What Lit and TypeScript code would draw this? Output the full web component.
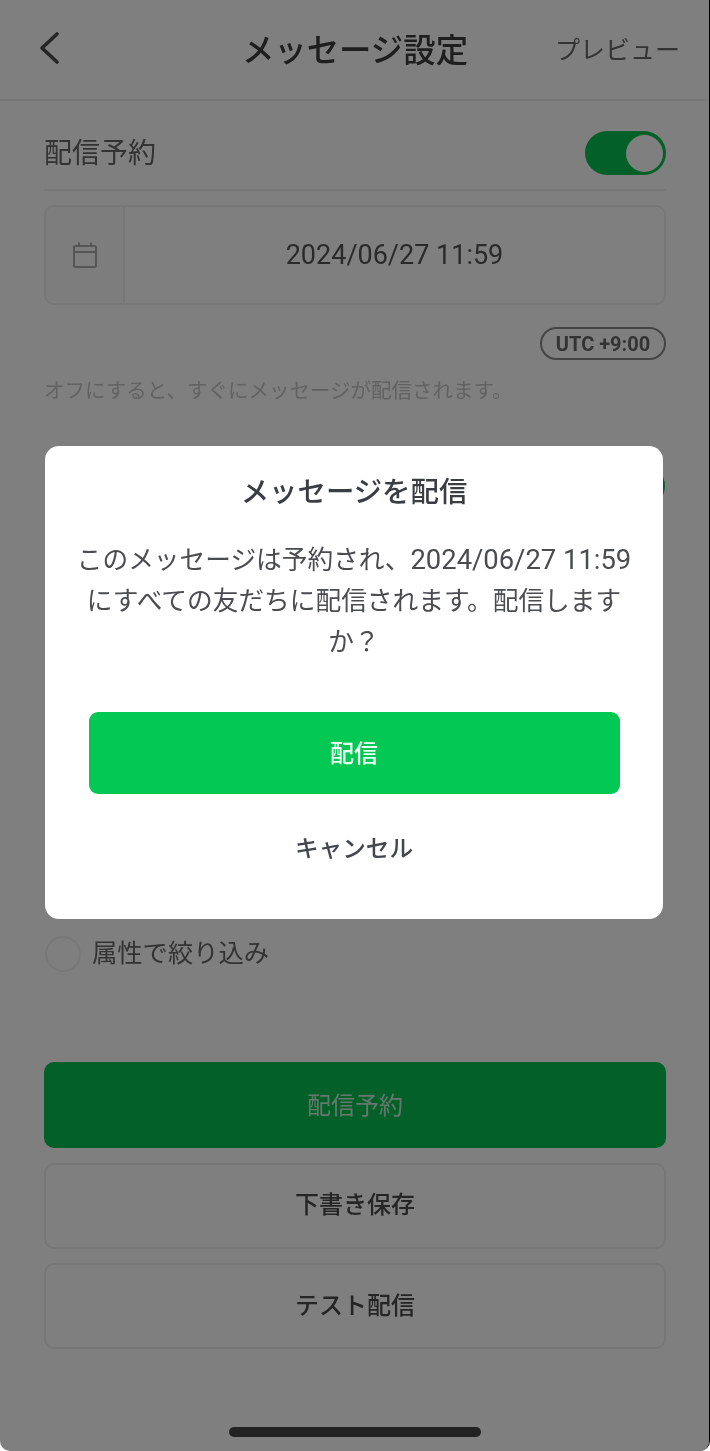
import { LitElement, html, css } from "lit";
import { customElement } from "lit/decorators.js";

@customElement("app-root")
export class AppRoot extends LitElement {
  static styles = css`
    :host {
      display: block;
      position: relative;
      width: 710px;
      height: 1451px;
      overflow: hidden;
      background: #fff;
      color: #555;
      font-family: Roboto, "Noto Sans CJK JP", "Noto Sans", sans-serif;
      filter: blur(0.5px);
    }
    .page { display: flex; flex-direction: column; height: 100%; box-sizing: border-box; }
    .header {
      height: 101px;
      flex: none;
      box-sizing: border-box;
      border-bottom: 2px solid #f0f0f0;
      display: grid;
      grid-template-columns: 1fr auto 1fr;
      align-items: center;
      padding: 3px 30px 0 30px;
    }
    .back { width: 24px; height: 36px; display: block; margin: 0 0 7px 8px; }
    .title { font-size: 32.4px; font-weight: 500; line-height: 44px; color: #3c3c3c; }
    .preview { font-size: 25px; justify-self: end; color: #666; line-height: 36px; }
    .content { padding: 0 44px; display: flex; flex-direction: column; flex: 1; }
    .row {
      height: 90px;
      box-sizing: border-box;
      border-bottom: 2px solid #f0f0f0;
      display: flex;
      align-items: center;
      justify-content: space-between;
      font-size: 28px;
      color: #666;
      padding-top: 12px;
    }
    .toggle {
      width: 81px;
      height: 44px;
      box-sizing: border-box;
      border-radius: 22px;
      background: #06c050;
      display: flex;
      align-items: center;
      justify-content: flex-end;
      padding-right: 3px;
      margin-top: 4px;
    }
    .knob { width: 37px; height: 37px; border-radius: 50%; background: #fff; }
    .datebox {
      margin-top: 14px;
      height: 100px;
      box-sizing: border-box;
      border: 2px solid #eee;
      border-radius: 10px;
      display: flex;
      align-items: stretch;
    }
    .cal {
      width: 77px;
      flex: none;
      background: #fafafa;
      border-right: 2px solid #eee;
      border-radius: 8px 0 0 8px;
      display: flex;
      align-items: center;
      justify-content: center;
    }
    .cal svg { width: 26px; height: 28px; }
    .date { flex: 1; display: flex; align-items: center; justify-content: center; font-size: 27px; color: #555; }
    .utc-row { display: flex; justify-content: flex-end; margin-top: 22px; }
    .utc {
      width: 126px;
      height: 33px;
      box-sizing: border-box;
      border: 2px solid #888;
      border-radius: 17px;
      display: flex;
      align-items: center;
      justify-content: center;
      font-size: 20px;
      font-weight: 700;
      color: #666;
    }
    .hint { margin-top: 16px; font-size: 20.5px; line-height: 30px; color: #c4c4c4; }
    .row2 { height: 46px; margin-top: 58px; display: flex; justify-content: flex-end; }
    .row2 .toggle { margin: 0 1px 0 0; }
    .spacer { height: 426px; flex: none; }
    .radio-row { display: flex; align-items: center; gap: 11px; font-size: 25.3px; color: #666; line-height: 36px; }
    .radio { width: 36px; height: 36px; margin-left: 1px; box-sizing: border-box; border: 2px solid #f0f0f0; border-radius: 50%; background: #fff; flex: none; }
    .actions { margin-top: 90px; display: flex; flex-direction: column; gap: 14.5px; }
    .btn {
      height: 86px;
      box-sizing: border-box;
      border: 2px solid #eee;
      border-radius: 10px;
      display: flex;
      align-items: center;
      justify-content: center;
      font-size: 24px;
      font-weight: 500;
      color: #4a4a4a;
      padding-bottom: 6px;
    }
    .btn.primary { background: #06c050; border-color: #06c050; font-weight: 400; color: #c8f0d8; padding-bottom: 4px; }
    .scrim {
      position: absolute;
      inset: 0;
      box-sizing: border-box;
      background: rgba(0, 0, 0, 0.5) padding-box;
      border-right: 1px solid #000;
      border-radius: 0 0 10px 10px;
    }
    .home { position: absolute; left: 229px; bottom: 14px; width: 252px; height: 10px; border-radius: 5px; background: #222; }
    .dialog {
      position: absolute;
      left: 45px;
      top: 446px;
      width: 618px;
      height: 473px;
      box-sizing: border-box;
      background: #fff;
      border-radius: 14px;
      padding: 26px 30px 0;
      display: flex;
      flex-direction: column;
      align-items: center;
      text-align: center;
    }
    .d-title { font-size: 28.4px; font-weight: 500; line-height: 42px; color: #3a3d42; }
    .d-body { margin-top: 26px; font-size: 25.7px; line-height: 41px; color: #4a4c50; width: 558px; }
    .d-body .n { font-size: 27.4px; }
    .d-ok {
      margin-top: 49px;
      align-self: center;
      width: 531px;
      height: 82px;
      box-sizing: border-box;
      padding-bottom: 4px;
      border-radius: 9px;
      background: #03c853;
      color: #eafff2;
      display: flex;
      align-items: center;
      justify-content: center;
      font-size: 24px;
      font-weight: 500;
    }
    .d-cancel { margin-top: 37px; font-size: 23.6px; font-weight: 500; line-height: 36px; color: #43464b; }
  `;

  render() {
    return html`
      <div class="page">
        <div class="header">
          <svg class="back" viewBox="0 0 24 36"><path d="M19 4 L4 18 L19 32" fill="none" stroke="#4a4a4a" stroke-width="3.6" stroke-linecap="round" stroke-linejoin="round"/></svg>
          <div class="title">メッセージ設定</div>
          <div class="preview">プレビュー</div>
        </div>
        <div class="content">
          <div class="row">
            <span>配信予約</span>
            <div class="toggle"><div class="knob"></div></div>
          </div>
          <div class="datebox">
            <div class="cal">
              <svg viewBox="0 0 26 28" fill="none" stroke="#aaa" stroke-width="2"><rect x="2" y="5" width="22" height="21" rx="1.5"/><path d="M2 11 H24 M7 1.5 V5 M19 1.5 V5"/></svg>
            </div>
            <div class="date">2024/06/27 11:59</div>
          </div>
          <div class="utc-row"><div class="utc">UTC +9:00</div></div>
          <div class="hint">オフにすると、すぐにメッセージが配信されます。</div>
          <div class="row2"><div class="toggle"><div class="knob"></div></div></div>
          <div class="spacer"></div>
          <div class="radio-row"><div class="radio"></div><span>属性で絞り込み</span></div>
          <div class="actions">
            <div class="btn primary">配信予約</div>
            <div class="btn">下書き保存</div>
            <div class="btn">テスト配信</div>
          </div>
        </div>
      </div>
      <div class="scrim"></div>
      <div class="home"></div>
      <div class="dialog">
        <div class="d-title">メッセージを配信</div>
        <div class="d-body">このメッセージは予約され、<span class="n">2024/06/27 11:59</span>にすべての友だちに配信されます。配信しますか？</div>
        <div class="d-ok">配信</div>
        <div class="d-cancel">キャンセル</div>
      </div>
    `;
  }
}
